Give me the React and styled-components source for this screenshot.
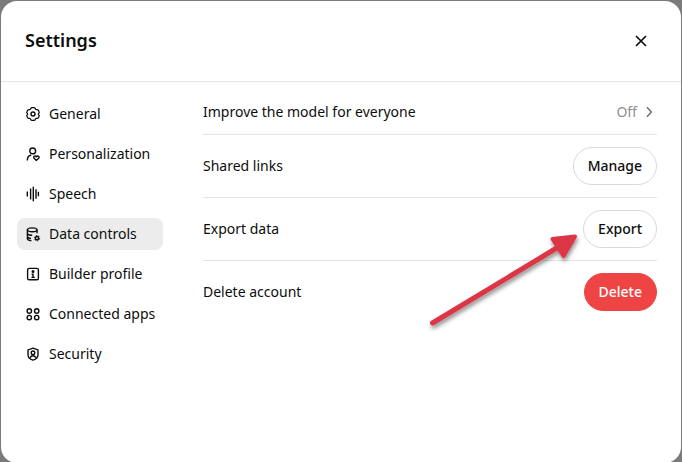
import React from "react";
import styled, { createGlobalStyle } from "styled-components";

const Global = createGlobalStyle`
  html, body {
    margin: 0;
    height: 100%;
    background: #7b7b7b;
    overflow: hidden;
  }
  * {
    box-sizing: border-box;
  }
`;

const icons = {
  General: (
    <>
      <path d="M7.7 2.8h2.6c.4 0 .7.2.9.5l.6 1.1c.2.3.5.5.9.5l1.2.1c.4 0 .7.2.9.5l1 1.8c.2.3.2.7 0 1l-.7 1c-.2.3-.2.7 0 1l.7 1c.2.3.2.7 0 1l-1 1.8c-.2.3-.5.5-.9.5l-1.2.1c-.4 0-.7.2-.9.5l-.6 1.1c-.2.3-.5.5-.9.5H7.7c-.4 0-.7-.2-.9-.5l-.6-1.1c-.2-.3-.5-.5-.9-.5l-1.2-.1c-.4 0-.7-.2-.9-.5l-1-1.8c-.2-.3-.2-.7 0-1l.7-1c.2-.3.2-.7 0-1l-.7-1c-.2-.3-.2-.7 0-1l1-1.8c.2-.3.5-.5.9-.5l1.2-.1c.4 0 .7-.2.9-.5l.6-1.1c.2-.3.5-.5.9-.5z" transform="translate(.9 .18) scale(.9)" />
      <circle cx="9" cy="9" r="2" />
    </>
  ),
  Personalization: (
    <>
      <circle cx="8.7" cy="5.9" r="2.9" />
      <path d="M3.3 15.4c0-3 1.4-4.9 3.9-5.4" />
      <path d="M12.4 15.4l-2.3-2.1c-1.3-1.4.9-3.1 2.3-1.6 1.4-1.5 3.6.2 2.3 1.6z" />
    </>
  ),
  Speech: <path d="M3.3 6.6v4.8M6.6 3.6v10.8M9.3 1.8v14.4M12 4.2v9.6M14.4 6.8v4.4" />,
  "Data controls": (
    <>
      <ellipse cx="8.2" cy="4.8" rx="4.8" ry="1.9" />
      <path d="M3.4 4.8v9c0 1.1 1.4 1.8 4 1.9M13 4.8v3.4M3.4 8.6c.6 1.1 2.2 1.7 4.8 1.7M3.4 12c.6.9 1.8 1.4 3.6 1.5" />
      <circle cx="13" cy="13.2" r="1.6" strokeWidth="1.5" />
      <circle cx="13" cy="13.2" r="2.7" strokeWidth="1" strokeDasharray="1.4 1.4" />
    </>
  ),
  "Builder profile": (
    <>
      <rect x="3.6" y="3.4" width="10.8" height="11.4" rx="1.6" />
      <circle cx="9" cy="6.6" r=".8" fill="#0d0d0d" />
      <path d="M7.6 9.3H9v3M7.4 12.4h3.4" />
    </>
  ),
  "Connected apps": (
    <>
      <circle cx="5.3" cy="6" r="2.2" />
      <circle cx="12.7" cy="6" r="2.2" />
      <circle cx="5.3" cy="12.6" r="2.2" />
      <circle cx="12.7" cy="12.6" r="2.2" />
    </>
  ),
  Security: (
    <>
      <path d="M9 3.2l5 1.7v4.7c0 2.9-2.2 4.8-5 5.6-2.8-.8-5-2.7-5-5.6V4.9z" />
      <circle cx="9" cy="7.8" r="1.8" />
      <path d="M6.1 12.8c.6-1.3 1.6-2 2.9-2s2.3.7 2.9 2" />
    </>
  ),
};

const navItems = Object.keys(icons);

const rows = [
  { label: "Improve the model for everyone", value: "Off" },
  { label: "Shared links", action: "Manage" },
  { label: "Export data", action: "Export" },
  { label: "Delete account", action: "Delete", danger: true },
];

const App = () => {
  return (
    <>
      <Global />
      <Dialog>
        <Header>
          <Title>Settings</Title>
          <CloseIcon viewBox="0 0 16 16">
            <path d="M3 3l10 10M13 3L3 13" />
          </CloseIcon>
        </Header>
        <Body>
          <Sidebar>
            {navItems.map((name) => (
              <NavItem key={name} $active={name === "Data controls"}>
                <NavIcon viewBox="0 0 18 18">{icons[name]}</NavIcon>
                <NavLabel>{name}</NavLabel>
              </NavItem>
            ))}
          </Sidebar>
          <Content>
            {rows.map((row) => (
              <Row key={row.label}>
                <RowLabel>{row.label}</RowLabel>
                {row.value && (
                  <Value>
                    {row.value}
                    <svg width="12" height="12" viewBox="0 0 12 12" fill="none" stroke="#6b6b6b" strokeWidth="1.4">
                      <path d="M4 1.2L8.4 6 4 10.8" />
                    </svg>
                  </Value>
                )}
                {row.action && <ActionButton $danger={row.danger}>{row.action}</ActionButton>}
              </Row>
            ))}
          </Content>
        </Body>
      </Dialog>
      <Arrow viewBox="0 0 682 462">
        <defs>
          <filter id="arrowShadow" x="-20%" y="-20%" width="140%" height="140%">
            <feDropShadow dx="1" dy="3" stdDeviation="2" floodColor="#000" floodOpacity="0.45" />
          </filter>
        </defs>
        <g filter="url(#arrowShadow)" fill="#dc3545" stroke="#dc3545" strokeLinejoin="round" strokeLinecap="round">
          <path d="M432.5 323L560 246" fill="none" strokeWidth="5" />
          <path d="M552.5 239L575 236.5L563.5 256z" strokeWidth="4" />
        </g>
      </Arrow>
    </>
  );
};

export default App;

const Dialog = styled.div`
  width: 680px;
  height: 462px;
  margin: 1px 0 0 1px;
  background: #fff;
  border-radius: 16px;
  font-family: "Noto Sans", sans-serif;
  font-size: 14px;
  color: #0d0d0d;
`;

const Header = styled.div`
  height: 81px;
  padding: 0 32px 0 24px;
  display: flex;
  align-items: center;
  justify-content: space-between;
  border-bottom: 1px solid #e5e5e5;
`;

const Title = styled.h2`
  margin: 0 0 2px;
  font-size: 18px;
  font-weight: 600;
`;

const CloseIcon = styled.svg`
  width: 16px;
  height: 16px;
  fill: none;
  stroke: #0d0d0d;
  stroke-width: 1.7;
`;

const Body = styled.div`
  display: flex;
  padding: 16px 24px 0 16px;
  gap: 40px;
`;

const Sidebar = styled.nav`
  width: 146px;
  flex-shrink: 0;
  display: flex;
  flex-direction: column;
  gap: 8px;
`;

const NavItem = styled.div`
  height: 32px;
  padding: 0 8px 0 7px;
  display: flex;
  align-items: center;
  gap: 7px;
  border-radius: 8px;
  white-space: nowrap;
  background: ${(p) => (p.$active ? "#ececec" : "transparent")};
`;

const NavIcon = styled.svg`
  width: 18px;
  height: 18px;
  flex-shrink: 0;
  fill: none;
  stroke: #0d0d0d;
  stroke-width: 1.4;
`;

const NavLabel = styled.span`
  margin-bottom: 2px;
`;

const Content = styled.div`
  flex: 1;
  display: flex;
  flex-direction: column;
  margin-top: -8px;
`;

const Row = styled.div`
  display: flex;
  align-items: center;
  justify-content: space-between;
  height: 63px;
  border-bottom: 1px solid #e5e5e5;

  &:first-child {
    height: 45px;
  }

  &:last-child {
    border-bottom: none;
    padding-bottom: 1px;
  }
`;

const RowLabel = styled.span`
  margin-bottom: 2px;
`;

const Value = styled.span`
  display: flex;
  align-items: center;
  gap: 6px;
  margin: 0 2px 2px 0;
  color: #8f8f8f;

  svg {
    margin-top: 2px;
  }
`;

const ActionButton = styled.button`
  height: 38px;
  padding: 0 14px 2px;
  border-radius: 19px;
  border: 1px solid ${(p) => (p.$danger ? "#ef4444" : "#d9d9d9")};
  background: ${(p) => (p.$danger ? "#ef4444" : "#fff")};
  color: ${(p) => (p.$danger ? "#fff" : "#0d0d0d")};
  font-family: inherit;
  font-size: 14px;
  font-weight: 500;
`;

const Arrow = styled.svg`
  position: absolute;
  left: 0;
  top: 0;
  width: 682px;
  height: 462px;
  pointer-events: none;
`;
